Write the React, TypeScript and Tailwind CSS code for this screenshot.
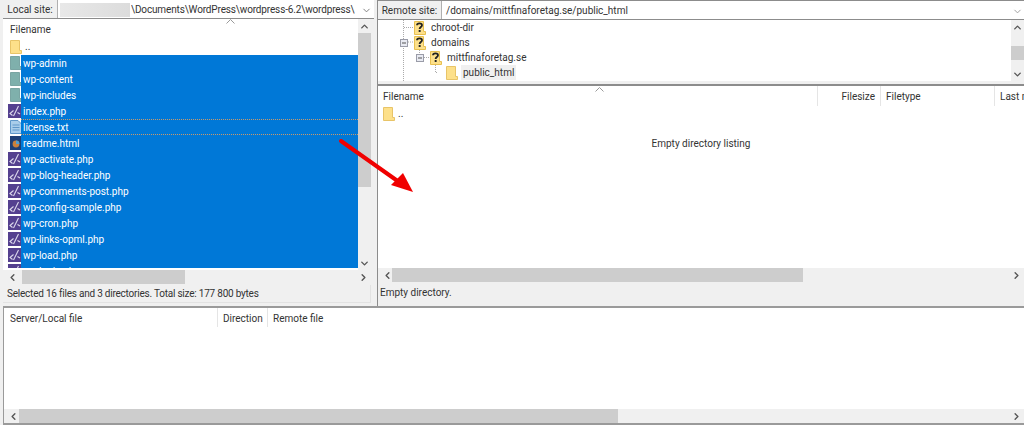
import { ChevronDown, ChevronLeft, ChevronRight, ChevronUp } from 'lucide-react';

const localFiles = [
    { name: 'wp-admin', icon: 'dir' },
    { name: 'wp-content', icon: 'dir' },
    { name: 'wp-includes', icon: 'dir' },
    { name: 'index.php', icon: 'php' },
    { name: 'license.txt', icon: 'txt' },
    { name: 'readme.html', icon: 'html' },
    { name: 'wp-activate.php', icon: 'php' },
    { name: 'wp-blog-header.php', icon: 'php' },
    { name: 'wp-comments-post.php', icon: 'php' },
    { name: 'wp-config-sample.php', icon: 'php' },
    { name: 'wp-cron.php', icon: 'php' },
    { name: 'wp-links-opml.php', icon: 'php' },
    { name: 'wp-load.php', icon: 'php' },
    { name: 'wp-login.php', icon: 'php' },
];

function Folder({ color = '#fde08a', edge = '#e8c468' }: { color?: string; edge?: string }) {
    return (
        <svg width="12" height="14" viewBox="0 0 12 14" className="shrink-0">
            <path d="M0.5 0.5H9.5V10.5H11.5V13.5H0.5Z" fill={color} stroke={edge} />
        </svg>
    );
}

function QuestionFolder() {
    return (
        <svg width="12" height="14" viewBox="0 0 12 14" className="shrink-0">
            <path d="M0.5 0.5H9.5V10.5H11.5V13.5H0.5Z" fill="#fde08a" stroke="#e8c050" />
            <path d="M3 4.2C3 1.8 8 1.8 8 4.2C8 6 5.6 6 5.6 8" fill="none" stroke="#222" strokeWidth="1.8" />
            <rect x="4.7" y="9" width="1.9" height="2" fill="#222" />
        </svg>
    );
}

function FileIcon({ type }: { type: string }) {
    if (type === 'dir') return <div className="ml-[2px]"><Folder color="#7fb0ac" edge="#7aa5a3" /></div>;
    if (type === 'php') {
        return (
            <svg width="14" height="14" viewBox="0 0 14 14" className="shrink-0">
                <rect width="14" height="14" fill="#54408f" />
                <path d="M5.5 6.5L2 9.5L4.5 11.5M5.5 12L10.5 2M9.5 8.5L12 10" fill="none" stroke="#dcd8ec" strokeWidth="1.1" />
            </svg>
        );
    }
    if (type === 'txt') {
        return (
            <svg width="12" height="14" viewBox="0 0 12 14" className="ml-[2px] shrink-0">
                <path d="M0.5 0.5H8L11.5 4V13.5H0.5Z" fill="#a9cdea" stroke="#5f97c9" />
                <path d="M2.5 5H9.5M2.5 7.5H9.5M2.5 10H9.5" stroke="#5f97c9" />
            </svg>
        );
    }
    return (
        <svg width="12" height="14" viewBox="0 0 12 14" className="ml-[2px] shrink-0">
            <rect width="12" height="14" fill="#1e3f75" />
            <circle cx="6" cy="8" r="3.4" fill="#c9803c" />
            <path d="M6 4.6A3.4 3.4 0 0 1 9.4 8H6Z" fill="#4f9fd0" />
        </svg>
    );
}

function SortMark() {
    return (
        <svg width="9" height="5" viewBox="0 0 9 5" className="absolute top-0 left-0">
            <path d="M0.5 4.5L4.5 0.5L8.5 4.5" fill="none" stroke="#9a9a9a" />
        </svg>
    );
}

function HScroll({ thumbLeft, thumbWidth }: { thumbLeft: number; thumbWidth: number }) {
    return (
        <div className="flex h-[14px] shrink-0 items-center bg-[#f0f0f0]">
            <div className="flex w-[19px] shrink-0 items-center justify-center text-[#555]">
                <ChevronLeft size={11} strokeWidth={3} />
            </div>
            <div className="relative h-full min-w-0 flex-1">
                <div className="absolute top-0 h-full bg-[#cdcdcd]" style={{ left: thumbLeft, width: thumbWidth }} />
            </div>
            <div className="flex w-[16px] shrink-0 items-center justify-center text-[#555]">
                <ChevronRight size={11} strokeWidth={3} />
            </div>
        </div>
    );
}

function VScroll({ thumbTop, thumbHeight }: { thumbTop: number; thumbHeight: number }) {
    return (
        <div className="flex w-[13px] shrink-0 flex-col bg-[#f0f0f0] text-[#555]">
            <div className="flex h-[14px] shrink-0 items-center justify-center"><ChevronUp size={11} strokeWidth={3} /></div>
            <div className="relative min-h-0 flex-1">
                <div className="absolute left-0 w-full bg-[#cdcdcd]" style={{ top: thumbTop, height: thumbHeight }} />
            </div>
            <div className="flex h-[14px] shrink-0 items-center justify-center"><ChevronDown size={11} strokeWidth={3} /></div>
        </div>
    );
}

function SiteBar({ label, labelWidth, children }: { label: string; labelWidth: string; children: React.ReactNode }) {
    return (
        <div className="flex h-[19px] shrink-0 border-b border-[#8c8c8c]">
            <div className={`flex shrink-0 items-center justify-center border-r border-[#b0b0b0] bg-[#f0f0f0] pt-[2px] ${labelWidth}`}>{label}</div>
            <div className="flex min-w-0 flex-1 items-center overflow-hidden bg-white pt-[2px] pl-[2px] whitespace-nowrap">
                {children}
            </div>
        </div>
    );
}

function TreeRow({ indent, toggle, children }: { indent: string; toggle?: boolean; children: React.ReactNode }) {
    return (
        <div className={`relative flex h-[15px] items-center ${indent}`}>
            {toggle && (
                <svg width="8" height="8" viewBox="0 0 8 8" className="absolute top-[4px] ml-[-14px]">
                    <rect x="0.5" y="0.5" width="7" height="7" fill="#e8eaf2" stroke="#9a9ca8" />
                    <path d="M2 4H6" stroke="#555" />
                </svg>
            )}
            {children}
        </div>
    );
}

export default function App() {
    return (
        <div className="flex h-[425px] w-[1024px] flex-col overflow-hidden bg-[#f0f0f0] font-['Roboto',sans-serif] text-[10px] leading-none text-[#333]">
            <div className="flex h-[306px] shrink-0">
                {/* Local pane */}
                <div className="flex w-[374px] shrink-0 flex-col pl-[3px]">
                    <SiteBar label="Local site:" labelWidth="w-[55px]">
                        <div className="mr-[1px] h-[14px] w-[70px] shrink-0 bg-gradient-to-r from-[#e8e8e8] to-[#dcdcdc]" />
                        <span className="min-w-0 flex-1 overflow-hidden leading-[16px] tracking-[-0.15px]">\Documents\WordPress\wordpress-6.2\wordpress\</span>
                        <ChevronDown size={11} className="mx-[2px] shrink-0 text-[#777]" />
                    </SiteBar>
                    <div className="mr-[3px] flex min-h-0 flex-1">
                        <div className="relative min-w-0 flex-1 bg-white">
                            <div className="relative flex h-[20px] items-center pt-[2px] pl-[7px]">
                                Filename
                                <div className="absolute top-0 left-[223px]"><SortMark /></div>
                            </div>
                            <div className="flex h-[16px] items-center pl-[7px]">
                                <Folder />
                                <span className="ml-[3px]">..</span>
                            </div>
                            <div className="h-[213px] overflow-hidden">
                                {localFiles.map((f) => (
                                    <div key={f.name} className="flex h-[16px] items-center pl-[5px]">
                                        <div className="flex w-[14px] shrink-0"><FileIcon type={f.icon} /></div>
                                        <div className={`ml-[-1px] flex h-full flex-1 items-center bg-[#0078d7] pt-[2px] pl-[2px] text-white ${f.name === 'license.txt' ? 'border-y border-dotted border-[#c99a6b]' : ''}`}>
                                            {f.name}
                                        </div>
                                    </div>
                                ))}
                            </div>
                        </div>
                        <VScroll thumbTop={0} thumbHeight={154} />
                    </div>
                    <div className="mr-[3px]">
                        <HScroll thumbLeft={0} thumbWidth={163} />
                    </div>
                    <div className="mt-[1px] mr-[3px] flex h-[18px] shrink-0 items-center border-r border-b border-[#e2e2e2] pl-[4px] tracking-[-0.22px]">Selected 16 files and 3 directories. Total size: 177 800 bytes</div>
                    <div className="h-[3px] shrink-0" />
                </div>

                <div className="w-[3px] shrink-0" />

                {/* Remote pane */}
                <div className="flex min-w-0 flex-1 flex-col border-l border-[#8c8c8c]">
                    <div className="h-[1px] shrink-0 bg-[#8c8c8c]" />
                    <SiteBar label="Remote site:" labelWidth="w-[64px]">
                        <span className="min-w-0 flex-1 overflow-hidden pl-[2px] leading-[16px]">/domains/mittfinaforetag.se/public_html</span>
                        <ChevronDown size={11} className="mx-[1px] shrink-0 text-[#999]" />
                    </SiteBar>
                    <div className="flex h-[61px] shrink-0 bg-white">
                        <div className="relative min-w-0 flex-1">
                            <svg width="60" height="61" viewBox="0 0 60 61" className="absolute top-0 left-0">
                                <g fill="none" stroke="#aaa" strokeDasharray="1 1">
                                    <path d="M25.5 0V61M26 7.5H36M26 22H36M41.5 30V37M42 37.5H52M57.5 45V52M58 52.5H60" />
                                </g>
                            </svg>
                            <TreeRow indent="pl-[36px]"><QuestionFolder /><span className="ml-[5px]">chroot-dir</span></TreeRow>
                            <TreeRow indent="pl-[36px]" toggle><QuestionFolder /><span className="ml-[5px]">domains</span></TreeRow>
                            <TreeRow indent="pl-[52px]" toggle><QuestionFolder /><span className="ml-[5px]">mittfinaforetag.se</span></TreeRow>
                            <TreeRow indent="pl-[68px]"><Folder /><span className="ml-[3px] flex h-full items-center bg-[#f0f0f0] px-[2px]">public_html</span></TreeRow>
                        </div>
                        <VScroll thumbTop={12} thumbHeight={14} />
                    </div>
                    <div className="h-[5px] shrink-0 border-b-2 border-[#8c8c8c]" />
                    <div className="flex min-h-0 flex-1 flex-col bg-white">
                        <div className="relative flex h-[20px] shrink-0">
                            <div className="flex w-[440px] items-center border-r border-[#e5e5e5] pt-[2px] pl-[5px]">Filename</div>
                            <div className="absolute top-[1px] left-[217px]"><SortMark /></div>
                            <div className="flex w-[63px] items-center justify-end border-r border-[#e5e5e5] pt-[2px] pr-[5px]">Filesize</div>
                            <div className="flex w-[114px] items-center border-r border-[#e5e5e5] pt-[2px] pl-[5px]">Filetype</div>
                            <div className="flex min-w-0 flex-1 items-center overflow-hidden pt-[2px] pl-[5px] whitespace-nowrap">Last modified</div>
                        </div>
                        <div className="flex h-[16px] shrink-0 items-center pl-[5px]">
                            <Folder />
                            <span className="ml-[3px]">..</span>
                        </div>
                        <div className="flex min-h-0 flex-1 justify-center pt-[17px]">
                            <span>Empty directory listing</span>
                        </div>
                    </div>
                    <HScroll thumbLeft={-5} thumbWidth={411} />
                    <div className="flex h-[20px] shrink-0 items-center pt-[2px] pl-[2px]">Empty directory.</div>
                    <div className="h-[4px] shrink-0" />
                </div>
            </div>

            {/* Queue */}
            <div className="ml-[3px] flex min-h-0 flex-1 flex-col border-t-2 border-b-2 border-l border-[#9a9a9a] bg-white">
                <div className="flex h-[19px] shrink-0 items-center">
                    <div className="flex h-full w-[214px] items-center border-r border-[#e5e5e5] pt-[2px] pl-[6px]">Server/Local file</div>
                    <div className="flex h-full w-[50px] items-center border-r border-[#e5e5e5] pt-[2px] pl-[5px]">Direction</div>
                    <div className="flex h-full items-center pt-[2px] pl-[5px]">Remote file</div>
                </div>
                <div className="min-h-0 flex-1" />
                <HScroll thumbLeft={-4} thumbWidth={599} />
            </div>

            {/* Annotation arrow lying over both panes */}
            <svg width="90" height="60" viewBox="0 0 90 60" className="absolute top-[135px] left-[335px]">
                <path d="M6 6L64 47" stroke="#f00000" strokeWidth="4" strokeLinecap="round" />
                <path d="M78 57L56 50L68 38Z" fill="#f00000" />
            </svg>
        </div>
    );
}
